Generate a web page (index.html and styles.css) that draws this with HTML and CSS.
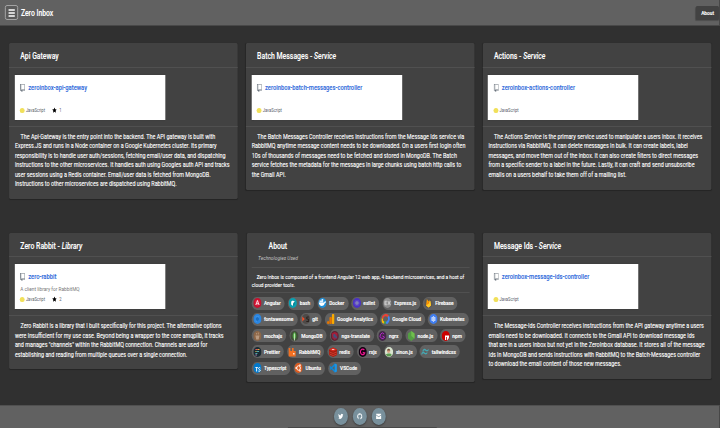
FILE: index.html
```html
<!DOCTYPE html>
<html lang="en">
<head>
<meta charset="utf-8">
<title>Zero Inbox</title>
<link rel="stylesheet" href="styles.css">
</head>
<body>
<svg width="0" height="0" class="defs">
  <symbol id="repo" viewBox="0 0 12 16"><path fill="#6a737d" d="M4 9H3V8h1v1zm0-3H3v1h1V6zm0-2H3v1h1V4zm0-2H3v1h1V2zm8-1v12c0 .55-.45 1-1 1H6v2l-1.500-1.500L3 16v-2H1c-.55 0-1-.45-1-1V1c0-.55.45-1 1-1h10c.55 0 1 .45 1 1zm-1 10H1v2h2v-1h3v1h5v-2zm0-10H2v9h9V1z"/></symbol>
  <symbol id="star" viewBox="0 0 14 16"><path d="M14 6l-4.900-.64L7 1 4.900 5.360 0 6l3.600 3.260L2.670 14 7 11.670 11.330 14l-.93-4.740z"/></symbol>
</svg>
<div class="viewport">
<div class="page">
  <header class="topbar">
    <button class="menu"><svg viewBox="0 0 8 8"><path d="M0 1h8M0 4h8M0 7h8" stroke="#fff" stroke-width="1.400"/></svg></button>
    <h1>Zero Inbox</h1>
    <button class="about-btn">About</button>
  </header>
  <main class="grid">
    <section class="card c1">
      <h2>Api Gateway</h2>
      <div class="slot"><div class="repo">
        <div class="name"><svg><use href="#repo"/></svg><a>zeroinbox-api-gateway</a></div>
        <div class="desc"></div>
        <div class="meta"><i></i>JavaScript<svg><use href="#star"/></svg>1</div>
      </div></div>
      <p>The Api-Gateway is the entry point into the backend. The API gateway is built with<br>Express.JS and runs in a Node container on a Google Kubernetes cluster. Its primary<br>responsibility is to handle user auth/sessions, fetching email/user data, and dispatching<br>instructions to the other microservices. It handles auth using Googles auth API and tracks<br>user sessions using a Redis container. Email/user data is fetched from MongoDB.<br>Instructions to other microservices are dispatched using RabbitMQ.</p>
    </section>
    <section class="card c2">
      <h2>Batch Messages - <em>Service</em></h2>
      <div class="slot"><div class="repo">
        <div class="name"><svg><use href="#repo"/></svg><a>zeroinbox-batch-messages-controller</a></div>
        <div class="desc"></div>
        <div class="meta"><i></i>JavaScript</div>
      </div></div>
      <p>The Batch Messages Controller receives instructions from the Message Ids service via<br>RabbitMQ anytime message content needs to be downloaded. On a users first login often<br>10s of thousands of messages need to be fetched and stored in MongoDB. The Batch<br>service fetches the metadata for the messages in large chunks using batch http calls to<br>the Gmail API.</p>
    </section>
    <section class="card c3">
      <h2>Actions - <em>Service</em></h2>
      <div class="slot"><div class="repo">
        <div class="name"><svg><use href="#repo"/></svg><a>zeroinbox-actions-controller</a></div>
        <div class="desc"></div>
        <div class="meta"><i></i>JavaScript</div>
      </div></div>
      <p>The Actions Service is the primary service used to manipulate a users inbox. It receives<br>instructions via RabbitMQ. It can delete messages in bulk. It can create labels, label<br>messages, and move them out of the inbox. It can also create filters to direct messages<br>from a specific sender to a label in the future. Lastly, it can craft and send unsubscribe<br>emails on a users behalf to take them off of a mailing list.</p>
    </section>
    <section class="card c4">
      <h2>Zero Rabbit - <em>Library</em></h2>
      <div class="slot"><div class="repo">
        <div class="name"><svg><use href="#repo"/></svg><a>zero-rabbit</a></div>
        <div class="desc">A client library for RabbitMQ</div>
        <div class="meta"><i></i>JavaScript<svg><use href="#star"/></svg>2</div>
      </div></div>
      <p>Zero Rabbit is a library that I built specifically for this project. The alternative options<br>were insufficient for my use case. Beyond being a wrapper to the core amqplib, it tracks<br>and manages "channels" within the RabbitMQ connection. Channels are used for<br>establishing and reading from multiple queues over a single connection.</p>
    </section>
    <section class="card about">
      <h2>About</h2>
      <h3>Technologies Used</h3>
      <p>Zero Inbox is composed of a frontend Angular 12 web app, 4 backend microservices, and a host of<br>cloud provider tools.</p>
      <div class="chips">
        <div class="row">
          <span class="chip"><svg viewBox="0 0 20 20"><circle cx="10" cy="10" r="10" fill="#c4122f"/><path d="M10 3l6 2-1 8-5 4-5-4-1-8z" fill="#dd1b3c"/><path d="M6 14l4-9 4 9M7.500 11.500h5" fill="none" stroke="#fff" stroke-width="1.800"/></svg>Angular</span>
          <span class="chip"><svg viewBox="0 0 20 20"><circle cx="10" cy="10" r="10" fill="#0a9fb0"/><path d="M10 4l5 3v6l-5 3-5-3V7z" fill="#0a8a98"/><path d="M10 5l-4 2v6l4 3 1-6 4-3z" fill="#fff"/></svg>bash</span>
          <span class="chip"><svg viewBox="0 0 20 20"><circle cx="10" cy="10" r="10" fill="#1d8fd8"/><path d="M1 9h13c1-2 2-3 3-3l2 3c-2 0-3 1-4 3-2 5-13 6-14-3z" fill="#fff"/><path d="M3 5h9v4H3zM8 2h4v3H8z" fill="#e2f2ff"/></svg>Docker</span>
          <span class="chip"><svg viewBox="0 0 20 20"><circle cx="10" cy="10" r="10" fill="#4b32c3"/><path d="M6 4h8l4 6-4 6H6l-4-6z" fill="#5943c8"/><path d="M10 6l4 2v4l-4 2-4-2V8z" fill="#817fb8"/></svg>eslint</span>
          <span class="chip"><svg viewBox="0 0 20 20"><circle cx="10" cy="10" r="10" fill="#8d8d8d"/><path d="M9 6.500H4v7h5M4 10h4.500M11 6l6 8M17 6l-6 8" fill="none" stroke="#eee" stroke-width="1.400"/></svg>Express.js</span>
          <span class="chip"><svg viewBox="0 0 20 20"><circle cx="10" cy="10" r="10" fill="#5b5752"/><path d="M4 15L6 2l4 5 2-3 4 11-6 4z" fill="#ffa000"/><path d="M4 15l7-7 4-2 1 9-6 4z" fill="#ffca28"/><path d="M4 15L10 7l2 3z" fill="#f57c00"/></svg>Firebase</span>
        </div>
        <div class="row">
          <span class="chip"><svg viewBox="0 0 20 20"><circle cx="10" cy="10" r="10" fill="#2a86e2"/><path d="M6 5h8v8H8v3H6z" fill="#4b9bea"/><circle cx="10" cy="10" r="4" fill="#1b6ec2"/></svg>fontawesome</span>
          <span class="chip"><svg viewBox="0 0 20 20"><circle cx="10" cy="10" r="10" fill="#4e4a48"/><path d="M1 5l6 5-6 5z" fill="#f34f29"/><path d="M17 6h-5v4h4v5h-5M12 15h5" fill="none" stroke="#2a211d" stroke-width="2"/></svg>git</span>
          <span class="chip"><svg viewBox="0 0 20 20"><rect x="13" y="0" width="6" height="20" rx="2" fill="#f9ab00"/><rect x="7" y="6" width="6" height="14" rx="2" fill="#e37400"/><circle cx="4" cy="17" r="3" fill="#e37400"/></svg>Google Analytics</span>
          <span class="chip"><svg viewBox="0 0 20 20"><path d="M2 9a8 8 0 0 1 14-4" fill="none" stroke="#ea4335" stroke-width="4.500"/><path d="M16 5a7 7 0 0 1 1 8l-3 4h-4" fill="none" stroke="#4285f4" stroke-width="4.500"/><path d="M10 17H6" fill="none" stroke="#34a853" stroke-width="5"/><path d="M6 17a5 5 0 0 1-4-8" fill="none" stroke="#fbbc05" stroke-width="4.500"/></svg>Google Cloud</span>
          <span class="chip"><svg viewBox="0 0 20 20"><circle cx="10" cy="10" r="10" fill="#3f7df0"/><path d="M10 4v12M5 7l10 6M15 7l-10 6" stroke="#fff" stroke-width="1"/><circle cx="10" cy="10" r="4" fill="none" stroke="#fff" stroke-width="1.600"/></svg>Kubernetes</span>
        </div>
        <div class="row">
          <span class="chip"><svg viewBox="0 0 20 20"><circle cx="10" cy="10" r="10" fill="#8d6748"/><path d="M5 9h10l-2 8H7zM7 4h2v3H7zM11 3h2v4h-2z" fill="#b99a80"/></svg>mochajs</span>
          <span class="chip"><svg viewBox="0 0 20 20"><circle cx="10" cy="10" r="10" fill="#42503a"/><path d="M10 2c7 6 4 12 0 16-4-4-7-10 0-16z" fill="#4faa41"/><path d="M10 5v14" stroke="#e8f0e2" stroke-width="1.600"/></svg>MongoDB</span>
          <span class="chip"><svg viewBox="0 0 20 20"><circle cx="10" cy="10" r="10" fill="#5d2434"/><path d="M10 2l7 3-1 9-6 4-6-4-1-9z" fill="#a61d38"/><path d="M6 8h6M9 6v2c0 3-2 4-3 5M8 9l3 4M10 15l2.500-6 2.500 6" fill="none" stroke="#2c5e8c" stroke-width="1.800"/></svg>ngx-translate</span>
          <span class="chip"><svg viewBox="0 0 20 20"><circle cx="10" cy="10" r="10" fill="#412846"/><path d="M14 6a5.500 5.500 0 1 0 1 6l-5-2" fill="none" stroke="#ba2bd2" stroke-width="2"/></svg>ngrx</span>
          <span class="chip"><svg viewBox="0 0 20 20"><path d="M10 0l8 5v10l-8 5-8-5V5z" fill="#539e43"/><path d="M10 0l8 5v10l-8-5z" fill="#6fbf4d"/></svg>node.js</span>
          <span class="chip"><svg viewBox="0 0 20 20"><circle cx="10" cy="10" r="10" fill="#cb0000"/><path d="M8 9h10v3a10 10 0 0 1-5 7V12h-2v6H8z" fill="#fff"/></svg>npm</span>
        </div>
        <div class="row">
          <span class="chip"><svg viewBox="0 0 20 20"><circle cx="10" cy="10" r="10" fill="#1a2b34"/><path d="M5 5h6" stroke="#ea5e5e" stroke-width="2"/><path d="M11 5h4M5 9h3" stroke="#f7ba3e" stroke-width="2"/><path d="M8 9h6M5 13h5" stroke="#56b3b4" stroke-width="2"/><path d="M5 16h4" stroke="#bf85bf" stroke-width="2"/></svg>Prettier</span>
          <span class="chip"><svg viewBox="0 0 20 20"><path d="M2 2h4v6h4V2h4v6h5v11H2z" fill="#f37021"/><rect x="13" y="12" width="3" height="3" fill="#fff"/></svg>RabbitMQ</span>
          <span class="chip"><svg viewBox="0 0 20 20"><path d="M0 5l10-4 10 4v11l-10 4-10-4z" fill="#a41e11"/><path d="M0 5l10-4 10 4-10 4z" fill="#d82c20"/><path d="M1 10l9 3 9-3M1 14l9 3 9-3" fill="none" stroke="#df5147" stroke-width="1.300"/><path d="M7 5h6" stroke="#fff" stroke-width="1.500"/></svg>redis</span>
          <span class="chip"><svg viewBox="0 0 20 20"><circle cx="10" cy="10" r="10" fill="#120210"/><path d="M14 6a5.500 5.500 0 1 0 1 6l-5-1" fill="none" stroke="#ed168f" stroke-width="2.600"/></svg>rxjs</span>
          <span class="chip"><svg viewBox="0 0 20 20"><circle cx="10" cy="10" r="10" fill="#d9e5d0"/><path d="M2 15l5-2h6l4 3a10 10 0 0 1-15-1z" fill="#5b9a4f"/><circle cx="9" cy="8" r="4" fill="#d8a486"/><path d="M5 7c1-5 7-5 8 0z" fill="#6a4a38"/></svg>sinon.js</span>
          <span class="chip"><svg viewBox="0 0 20 20"><path d="M4 9c2-5 5-5 8-2 2 1 4 1 6-2M1 15c2-5 5-5 8-2 2 1 4 1 6-2" fill="none" stroke="#44a8b3" stroke-width="2.600"/></svg>tailwindcss</span>
        </div>
        <div class="row">
          <span class="chip"><svg viewBox="0 0 20 20"><circle cx="10" cy="10" r="10" fill="#0279cc"/><path d="M5 9h6M8 9v8M17 10c-3-2-5 0-4 2 1 1 3 1 4 2 0 3-3 3-5 2" fill="none" stroke="#fff" stroke-width="2"/></svg>Typescript</span>
          <span class="chip"><svg viewBox="0 0 20 20"><circle cx="10" cy="10" r="10" fill="#dd5b1f"/><circle cx="10" cy="10" r="4.500" fill="none" stroke="#fff" stroke-width="2"/><circle cx="4" cy="10" r="1.800" fill="#fff"/><circle cx="13.500" cy="4.500" r="1.800" fill="#fff"/><circle cx="13.500" cy="15.500" r="1.800" fill="#fff"/></svg>Ubuntu</span>
          <span class="chip"><svg viewBox="0 0 20 20"><path d="M14 1l5 2v14l-5 2L1 8l2-2 11 8V6L3 14l-2-2z" fill="#0e87d6"/><path d="M14 1l5 2v14l-5 2z" fill="#1f94e2"/></svg>VSCode</span>
        </div>
      </div>
    </section>
    <section class="card c6">
      <h2>Message Ids - <em>Service</em></h2>
      <div class="slot"><div class="repo">
        <div class="name"><svg><use href="#repo"/></svg><a>zeroinbox-message-ids-controller</a></div>
        <div class="desc"></div>
        <div class="meta"><i></i>JavaScript</div>
      </div></div>
      <p>The Message-Ids Controller receives instructions from the API gateway anytime a users<br>emails need to be downloaded. It connects to the Gmail API to download message Ids<br>that are in a users Inbox but not yet in the ZeroInbox database. It stores all of the message<br>Ids in MongoDB and sends instructions with RabbitMQ to the Batch-Messages controller<br>to download the email content of those new messages.</p>
    </section>
  </main>
  <footer>
    <div class="fabs">
      <span class="fab"><svg viewBox="0 0 24 24"><path d="M23 5c-.8.400-1.700.6-2.600.8.900-.6 1.600-1.500 2-2.500-.9.500-1.900.9-2.900 1.100a4.600 4.600 0 0 0-7.900 4.200C7.800 8.400 4.400 6.600 2 3.800c-1.200 2.100-.6 4.800 1.400 6.200-.8 0-1.500-.2-2-.6 0 2.300 1.500 4.200 3.600 4.700-.7.200-1.400.2-2 .1.600 1.800 2.300 3.100 4.300 3.200A9.300 9.300 0 0 1 .5 19.300c8.900 5.600 20.300-.6 20.200-12C21.600 6.700 22.400 5.900 23 5z"/></svg></span>
      <span class="fab"><svg viewBox="0 0 24 24"><path d="M12 1a11 11 0 0 0-3.500 21.500c.5.100.8-.3.800-.6v-2c-3 .7-3.700-1.300-3.700-1.300-.5-1.300-1.200-1.600-1.200-1.600-1-.7.100-.7.100-.7 1.100.1 1.700 1.100 1.700 1.100 1 1.700 2.600 1.200 3.200.9.100-.7.400-1.200.7-1.500-2.400-.3-5-1.200-5-5.400 0-1.200.4-2.200 1.100-3-.1-.3-.5-1.400.1-2.900 0 0 .9-.3 3 1.100 1.800-.5 3.700-.5 5.500 0 2.100-1.400 3-1.100 3-1.100.6 1.500.2 2.600.1 2.900.7.800 1.100 1.800 1.100 3 0 4.200-2.600 5.100-5 5.400.4.300.7 1 .7 2v3.100c0 .3.200.7.800.6A11 11 0 0 0 12 1z"/></svg></span>
      <span class="fab"><svg viewBox="0 0 24 24"><path d="M1 3h22v2l-11 7L1 5zM1 8l11 7 11-7v13H1z"/></svg></span>
    </div>
    <div class="bar"></div>
  </footer>
</div>
</div>
</body>
</html>
```
FILE: styles.css
```css
* { box-sizing: border-box; margin: 0; padding: 0; }
html, body { width: 720px; height: 428px; overflow: hidden; background: #303030; }
.defs { display: none; }
.viewport { width: 720px; height: 428px; overflow: hidden; contain: strict; }
/* The page is laid out wide and condensed horizontally. */
.page {
  width: 875.3px; height: 428px; transform: scaleX(0.8225); transform-origin: 0 0;
  display: flex; flex-direction: column; overflow: hidden;
  font-family: Roboto, sans-serif; color: #fff; background: #303030; white-space: nowrap;
}
.topbar { height: 26.3px; flex: none; background: #616161; display: flex; align-items: center; padding: 0 1px 0 6px; border-bottom: 1px solid #484848; }
button { font-family: inherit; color: #fff; border: 0; }
.menu { width: 16px; height: 15.5px; border: 1px solid #aaa; border-radius: 2.5px; background: #5b5b5b; display: flex; align-items: center; justify-content: center; }
.menu svg { width: 8.5px; height: 8px; }
h1 { font-size: 8.3px; font-weight: 500; margin-left: 3.4px; -webkit-text-stroke: .12px #fff; }
.about-btn { margin-left: auto; width: 28px; height: 14px; background: #424242; border-radius: 1.5px; font-size: 5.8px; font-weight: 500; -webkit-text-stroke: .15px #fff; box-shadow: 0 1px 1px rgba(0,0,0,.2); }

.grid { flex: 1; padding: 17.2px 0 0 11.3px; display: grid; grid-template-columns: repeat(3, 278px); grid-template-rows: 189.8px auto; column-gap: 9.9px; align-items: start; }
.card { background: #424242; border-radius: 1.7px; box-shadow: 0 .8px 1px rgba(0,0,0,.25); }
.c1 { height: 155.500px; }
.c2, .c3 { height: 146.500px; }
.c4 { height: 136px; }
.c6 { height: 145.500px; }
h2 { height: 24.2px; line-height: 27px; padding-left: 13.4px; font-size: 8.4px; font-weight: 500; border-bottom: 1px solid #505050; -webkit-text-stroke: .12px #fff; }
.c4 h2, .c6 h2 { height: 23.500px; line-height: 27px; }
.slot { height: 59px; padding: 7.700px 0 0 6.400px; border-bottom: 1px solid #505050; }
.repo { width: 183px; height: 44.500px; background: #fff; padding: 7.500px 0 0 6.800px; box-shadow: 0 0 1.500px rgba(0,0,0,.6); color: #586069; }
.name { display: flex; align-items: center; height: 9px; }
.name svg { width: 6.500px; height: 8px; margin: 1px 3.300px 0 0; }
.name a { color: #2f6adb; font-size: 7.050px; font-weight: 500; -webkit-text-stroke: .08px #2f6adb; }
.desc { height: 14.500px; line-height: 16px; font-size: 5.800px; color: #777; }
.meta { display: flex; align-items: center; height: 8px; font-size: 4.950px; }
.meta i { width: 5.800px; height: 5.600px; border-radius: 50%; background: #f1e05a; margin-right: 1.200px; }
.meta svg { width: 6.500px; height: 6.500px; margin: 0 2.800px 0 8px; color: #111; }
.card p { padding: 6.300px 0 0 6.800px; font-size: 6.590px; line-height: 9.500px; text-indent: 6.800px; color: #fff; -webkit-text-stroke: .1px #fff; }

.about { height: 148.500px; margin-left: 1px; padding: 0 6px; width: 277px; }
.about h2 { height: 19.500px; padding-left: 20.400px; border: 0; line-height: 27px; }
.about h3 { height: 15.500px; line-height: 9.500px; padding-left: 7.600px; font-size: 5.930px; font-weight: 400; font-style: italic; color: #c4c4c4; border-bottom: 1px solid #505050; }
.card.about p { height: 25px; padding: 4.800px 0 0; font-size: 5.800px; line-height: 8.300px; text-indent: 6px; border-bottom: 1px solid #505050; }
.chips { padding-top: 3.300px; display: flex; flex-direction: column; gap: 3.250px; }
.row { display: flex; gap: 3.500px; }
.chip { height: 13px; display: flex; align-items: center; padding: 0 5px 0 1.700px; border-radius: 7px; background: #616161; font-size: 5.830px; font-weight: 500; -webkit-text-stroke: .15px #fff; }
.chip svg { width: 10px; height: 10px; margin-right: 3px; flex: none; }

footer { height: 22.700px; background: #616161; border-top: 1px solid #505050; display: flex; flex-direction: column; align-items: center; justify-content: space-between; padding-top: 2px; flex: none; }
.fabs { display: flex; gap: 6.400px; }
.fab { width: 16.700px; height: 16.700px; border-radius: 50%; background: #78909c; display: flex; align-items: center; justify-content: center; box-shadow: 0 1px 2px rgba(0,0,0,.4); }
.fab svg { width: 6.800px; height: 6.800px; fill: #fff; }
.bar { width: 181px; height: 1px; background: #484848; margin-left: 5px; }
```
